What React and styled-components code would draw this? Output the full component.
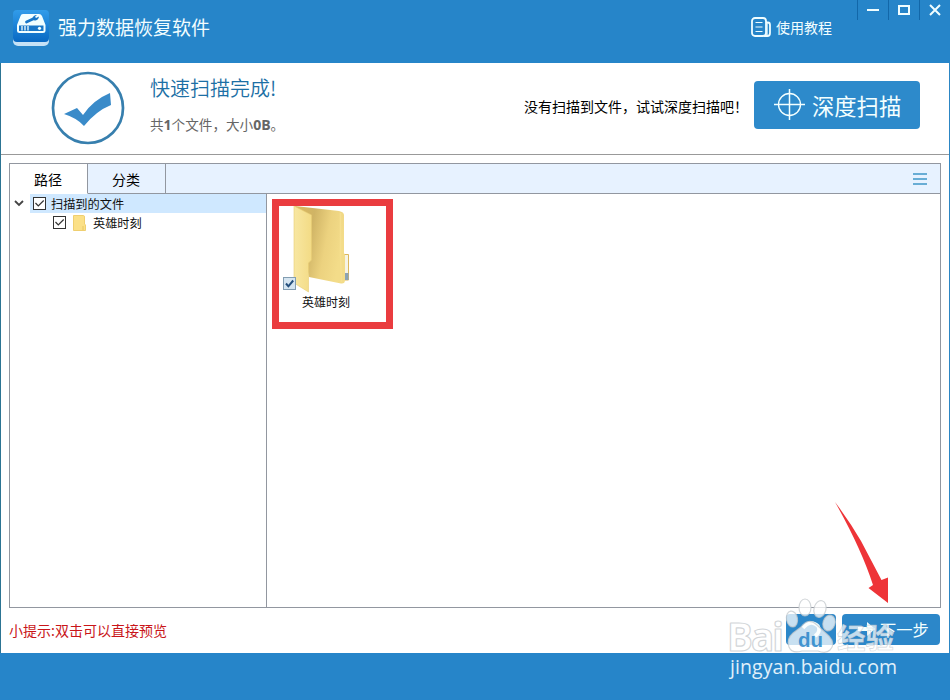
import React, { useState } from "react";
import styled, { createGlobalStyle } from "styled-components";

const GlobalStyle = createGlobalStyle`
  * {
    box-sizing: border-box;
  }
  body {
    margin: 0;
    font-family: "Noto Sans", "Noto Sans CJK SC", sans-serif;
    color: #111;
  }
`;

const Window = styled.div`
  position: relative;
  display: flex;
  flex-direction: column;
  width: 950px;
  height: 700px;
  overflow: hidden;
  background: #fff;
`;

const Header = styled.header`
  display: flex;
  align-items: flex-start;
  height: 63px;
  flex: none;
  padding-left: 11px;
  background: #2685c9;
  color: #f2fdff;
`;

const LogoIcon = styled.svg`
  width: 40px;
  height: 40px;
  margin-top: 8px;
`;

const Title = styled.h1`
  flex: 1;
  margin: 13px 0 0 7px;
  font-family: "Noto Sans CJK SC", sans-serif;
  font-size: 19px;
  font-weight: 400;
  line-height: 28px;
`;

const Tutorial = styled.div`
  display: flex;
  align-items: center;
  gap: 4px;
  margin: 17px 25px 0 0;
  font-family: "Noto Sans CJK SC", sans-serif;
  font-size: 14px;
  line-height: 20px;
`;

const WindowButton = styled.button`
  display: flex;
  justify-content: center;
  width: 31px;
  height: 20px;
  padding: 4px 0 0;
  border: 0;
  border-left: 1px solid #1267a9;
  background: none;
  color: #effdff;
`;

const Body = styled.main`
  display: flex;
  flex-direction: column;
  height: 590px;
  flex: none;
  border-left: 1px solid #2c7493;
  border-right: 1px solid #2c86c4;
`;

const Summary = styled.section`
  display: flex;
  align-items: flex-start;
  height: 92px;
  flex: none;
  padding: 8px 29px 0 50px;
  border-bottom: 1px solid #999;
`;

const SummaryText = styled.div`
  flex: 1;
  margin-left: 25px;
  font-family: "Noto Sans CJK SC", sans-serif;
`;

const Heading = styled.div`
  margin-top: 2px;
  color: #1c6fa5;
  font-size: 20px;
  font-weight: 350;
  line-height: 30px;
`;

const Detail = styled.div`
  margin-top: 11px;
  color: #666;
  font-size: 13.6px;
  line-height: 20px;

  b {
    font-family: "Open Sans", sans-serif;
    font-size: 14px;
  }
`;

const Notice = styled.div`
  width: 230px;
  margin-top: 25px;
  color: #000;
  font-family: "Noto Sans CJK SC", sans-serif;
  font-size: 14px;
  line-height: 20px;
  white-space: nowrap;
`;

const ScanButton = styled.button`
  display: flex;
  align-items: center;
  gap: 7px;
  width: 166px;
  height: 48px;
  margin-top: 10px;
  padding: 0 0 1px 20px;
  border: 0;
  border-radius: 4px;
  background: #2d8acb;
  color: #f3ffff;
  font-family: "Noto Sans CJK SC", sans-serif;
  font-size: 22.3px;
`;

const Panel = styled.section`
  display: flex;
  flex-direction: column;
  width: 932px;
  height: 445px;
  flex: none;
  margin: 8px 0 0 8px;
  border: 1px solid #9297a0;
`;

const TabBar = styled.div`
  display: flex;
  height: 30px;
  flex: none;
  background: #e7f2ff;
`;

const Tab = styled.button`
  width: 78px;
  height: 30px;
  padding: 0 1px 0 0;
  border: 0;
  border-right: 1px solid #9297a0;
  border-bottom: 1px solid ${(props) => (props.$active ? "#fff" : "#9297a0")};
  background: ${(props) => (props.$active ? "#fff" : "#e7f2ff")};
  color: #000;
  font-family: "Noto Sans CJK SC", sans-serif;
  font-size: 14px;
`;

const TabSpace = styled.div`
  display: flex;
  flex: 1;
  align-items: center;
  justify-content: flex-end;
  padding-right: 12px;
  border-bottom: 1px solid #9297a0;
`;

const Content = styled.div`
  display: flex;
  flex: 1;
`;

const Tree = styled.div`
  width: 257px;
  border-right: 1px solid #9297a0;
`;

const TreeRow = styled.div`
  display: flex;
  align-items: center;
  height: 19px;
  padding-left: ${(props) => (props.$child ? 43 : 4)}px;
`;

const TreeLabel = styled.div`
  display: flex;
  flex: 1;
  align-items: center;
  gap: ${(props) => props.$gap}px;
  height: 19px;
  padding-left: ${(props) => (props.$selected ? 3 : 0)}px;
  background: ${(props) => (props.$selected ? "#cfe8ff" : "transparent")};
  font-family: "Noto Sans CJK SC", sans-serif;
  font-size: 12.2px;
  line-height: 18px;
`;

const Chevron = styled.svg`
  width: 10px;
  height: 8px;
  margin-right: 6px;
`;

const Files = styled.div`
  position: relative;
  flex: 1;
`;

const FileItem = styled.div`
  position: relative;
  display: flex;
  flex-direction: column;
  align-items: center;
  width: 86px;
  margin-left: 16px;
  padding-top: 10px;
`;

const FolderSvg = styled.svg`
  width: 60px;
  height: 90px;
  margin-right: 9px;
`;

const FileName = styled.div`
  margin-top: -1px;
  font-family: "Noto Sans CJK SC", sans-serif;
  font-size: 12px;
  line-height: 18px;
`;

const FileCheck = styled.svg`
  position: absolute;
  left: 0;
  top: 83px;
`;

const RedFrame = styled.div`
  position: absolute;
  left: 5px;
  top: 5px;
  width: 121px;
  height: 130px;
  border: 7px solid #ea3c3f;
`;

const Footer = styled.footer`
  display: flex;
  flex: 1;
  align-items: flex-start;
  padding: 6px 9px 0 8px;
`;

const Tip = styled.div`
  flex: 1;
  margin-top: 6px;
  color: #c91519;
  font-family: "Noto Sans CJK SC", sans-serif;
  font-size: 14px;
  line-height: 20px;
`;

const ActionButton = styled.button`
  display: flex;
  align-items: center;
  justify-content: ${(props) => (props.$center ? "center" : "flex-start")};
  gap: 4px;
  width: ${(props) => props.$width}px;
  height: 31px;
  margin-left: 6px;
  padding: 0 0 1px ${(props) => (props.$center ? 0 : 15)}px;
  border: 0;
  border-radius: 4px;
  background: #2c87c9;
  color: #f3ffff;
  font-family: "Noto Sans CJK SC", sans-serif;
  font-size: 16.3px;
`;

const BottomBar = styled.div`
  flex: 1;
  background: #2685c9;
`;

const Arrow = styled.svg`
  position: absolute;
  left: 830px;
  top: 498px;
`;

const Watermark = styled.svg`
  position: absolute;
  left: 722px;
  top: 594px;
`;

const Logo = () => (
  <LogoIcon viewBox="0 0 40 40">
    <defs>
      <linearGradient id="logoBlue" x1="0" y1="0" x2="0" y2="1">
        <stop offset="0" stopColor="#319cea" />
        <stop offset="1" stopColor="#0869c3" />
      </linearGradient>
    </defs>
    <rect x="2" y="7" width="36" height="31" rx="5" fill="#c5e2f6" />
    <rect x="2" y="2" width="36" height="32" rx="4" fill="url(#logoBlue)" />
    <path d="M12 6H28Q30 6 31 8L34.5 17V23Q34.5 25 32 25H8.5Q6 25 6 23V17L9.5 8Q10 6 12 6Z" fill="#f1feff" />
    <path d="M8 17.5H32.5V23H8Z" fill="#1876c7" />
    <path d="M11 18V22.5M14 18V22.5M17 18V22.5" stroke="#f1feff" strokeWidth="1.3" />
    <circle cx="28.5" cy="20.3" r="1.6" fill="#f1feff" />
    <path d="M15.5 14L23 10.5" stroke="#1876c7" strokeWidth="2.8" strokeLinecap="round" />
    <path d="M26 7Q22 7 21.5 10.5Q22 13 24.5 12.5Q27.5 12 28 8.5L25 10L24 8.8Z" fill="#1876c7" />
  </LogoIcon>
);

const Check = () => (
  <svg width="13" height="13" viewBox="0 0 13 13">
    <rect x="0.5" y="0.5" width="12" height="12" fill="#fff" stroke="#333" />
    <path d="M2.5 6L5.3 9L10.7 3.5" fill="none" stroke="#333" strokeWidth="1.2" />
  </svg>
);

const FolderIcon = () => (
  <FolderSvg viewBox="0 0 60 90">
    <defs>
      <linearGradient id="folderBack" x1="0" y1="0" x2="1" y2="0.3">
        <stop offset="0" stopColor="#dcb95f" />
        <stop offset="0.38" stopColor="#d0b465" />
        <stop offset="0.7" stopColor="#ecd27f" />
        <stop offset="1" stopColor="#f3dc89" />
      </linearGradient>
      <linearGradient id="folderFront" x1="0" y1="0" x2="1" y2="0">
        <stop offset="0" stopColor="#f8e7a2" />
        <stop offset="1" stopColor="#f3db85" />
      </linearGradient>
    </defs>
    <path d="M50 50.5H56.5V76H50Z" fill="#f6f4e6" stroke="#dbb75c" />
    <path d="M53 69H56.5V76H53Z" fill="#8ba3b5" />
    <path d="M3 2L47 7Q52 8 52 11V49L53 51V76Q53 80 49 79.5L17 73Z" fill="url(#folderBack)" />
    <path d="M48.5 9V52L49.5 78" fill="none" stroke="#f5df91" strokeWidth="1.5" />
    <path d="M2 2L19.5 11V56L16.5 59V88L2 79Z" fill="url(#folderFront)" stroke="#e8cc74" strokeWidth="0.6" />
  </FolderSvg>
);

const App = () => {
  const [tab, setTab] = useState("路径");

  return (
    <>
      <GlobalStyle />
      <Window>
        <Header>
          <Logo />
          <Title>强力数据恢复软件</Title>
          <Tutorial>
            <svg width="21" height="20" viewBox="0 0 21 20" fill="none" stroke="#effdff">
              <rect x="1" y="1" width="14" height="18" rx="3" strokeWidth="1.8" />
              <path d="M15 5.5H17Q19 5.5 19 8V16Q19 19 16.5 19H13" strokeWidth="1.8" />
              <path d="M16 6V18" strokeWidth="1.3" />
              <path d="M4.5 5.5H11.5M4.5 10H11.5M4.5 14.5H11.5" strokeWidth="1.2" />
            </svg>
            使用教程
          </Tutorial>
          <WindowButton>
            <svg width="12" height="12">
              <path d="M0 6H12" stroke="currentColor" strokeWidth="2" />
            </svg>
          </WindowButton>
          <WindowButton>
            <svg width="12" height="12">
              <rect x="1" y="2" width="10" height="8" fill="none" stroke="currentColor" strokeWidth="2" />
            </svg>
          </WindowButton>
          <WindowButton>
            <svg width="12" height="12">
              <path d="M1 1L11 11M11 1L1 11" stroke="currentColor" strokeWidth="2" />
            </svg>
          </WindowButton>
        </Header>

        <Body>
          <Summary>
            <svg width="74" height="74" viewBox="0 0 74 74">
              <circle cx="37" cy="37" r="35" fill="none" stroke="#377fae" strokeWidth="2.7" />
              <path
                d="M13 43L26 37L32 44Q42 29 59 22L60 34Q45 40 33 55Q26 47 13 43Z"
                fill="#3a8bc9"
              />
            </svg>
            <SummaryText>
              <Heading>快速扫描完成!</Heading>
              <Detail>
                共<b>1</b>个文件，大小<b>0B</b>。
              </Detail>
            </SummaryText>
            <Notice>没有扫描到文件，试试深度扫描吧！</Notice>
            <ScanButton>
              <svg width="31" height="31" viewBox="0 0 31 31" fill="none" stroke="currentColor">
                <circle cx="15.5" cy="15.5" r="11" strokeWidth="1.3" />
                <path d="M0 15.5H31M15.5 0V31" strokeWidth="1.5" />
              </svg>
              深度扫描
            </ScanButton>
          </Summary>

          <Panel>
            <TabBar>
              {["路径", "分类"].map((name) => (
                <Tab key={name} $active={tab === name} onClick={() => setTab(name)}>
                  {name}
                </Tab>
              ))}
              <TabSpace>
                <svg width="16" height="14">
                  <path d="M1 2H15M1 7H15M1 12H15" stroke="#68add5" strokeWidth="1.8" />
                </svg>
              </TabSpace>
            </TabBar>
            <Content>
              <Tree>
                <TreeRow>
                  <Chevron viewBox="0 0 10 8">
                    <path d="M1 1L5 5L9 1" fill="none" stroke="#444" strokeWidth="1.8" />
                  </Chevron>
                  <TreeLabel $selected $gap={5}>
                    <Check />
                    扫描到的文件
                  </TreeLabel>
                </TreeRow>
                <TreeRow $child>
                  <TreeLabel $gap={7}>
                    <Check />
                    <svg width="13" height="16" viewBox="0 0 13 16">
                      <path d="M0.5 0.5H10.5Q11.5 0.5 11.5 2V9L12.5 10V15.5H0.5Z" fill="#fbe087" stroke="#efcf70" />
                      <path d="M10 11V15" stroke="#e7c660" />
                    </svg>
                    英雄时刻
                  </TreeLabel>
                </TreeRow>
              </Tree>
              <Files>
                <FileItem>
                  <FolderIcon />
                  <FileName>英雄时刻</FileName>
                  <FileCheck width="13" height="13" viewBox="0 0 13 13">
                    <rect x="0.5" y="0.5" width="12" height="12" fill="#d5e5f1" stroke="#829db1" />
                    <path d="M3 6.5L5.4 9.3L10.2 3.5" fill="none" stroke="#244f7c" strokeWidth="2" />
                  </FileCheck>
                </FileItem>
                <RedFrame />
              </Files>
            </Content>
          </Panel>

          <Footer>
            <Tip>小提示:双击可以直接预览</Tip>
            <ActionButton $center $width={50}>
              <svg width="24" height="20" viewBox="0 0 24 20">
                <path d="M4 9Q12 0 19 7Q22 13 16 17" fill="none" stroke="#f3ffff" strokeWidth="3.5" />
              </svg>
            </ActionButton>
            <ActionButton $width={98}>
              <svg width="19" height="16" viewBox="0 0 19 16">
                <path d="M1 6H10V1L18 8L10 15V10H1Z" fill="#f3ffff" />
              </svg>
              下一步
            </ActionButton>
          </Footer>
        </Body>
        <BottomBar />

        <Arrow width="62" height="108" viewBox="0 0 62 108">
          <path d="M5 4Q20 24 31 43L51.5 82L58 79.5V105L38.5 90L43 87Q31 50 5 4Z" fill="#ee3438" />
        </Arrow>

        <Watermark width="184" height="92" viewBox="0 0 184 92">
          <g
            fill="#fff"
            fillOpacity="0.74"
            stroke="#c3c8cc"
            strokeOpacity="0.75"
            strokeWidth="1.2"
            strokeLinejoin="round"
            fontWeight="700"
          >
            <text x="5" y="57" fontFamily="Open Sans, sans-serif" fontSize="38.5" textLength="57">
              Bai
            </text>
            <ellipse cx="70" cy="25" rx="5.5" ry="8" transform="rotate(-10 70 25)" />
            <ellipse cx="83" cy="13.5" rx="6" ry="8.5" />
            <ellipse cx="98" cy="15" rx="6" ry="8.5" transform="rotate(14 98 15)" />
            <ellipse cx="107" cy="29" rx="6" ry="8" transform="rotate(18 107 29)" />
            <path d="M79 33Q86 23 95 31L107 42Q114 50 108 56Q104 60 96 57H80Q70 60 67 53Q64 45 71 39Z" />
            <text
              x="115"
              y="55"
              fontFamily="Noto Sans CJK SC, sans-serif"
              fontSize="28.5"
              strokeWidth="0.6"
            >
              经验
            </text>
          </g>
          <text
            x="76"
            y="53"
            fill="#2685c9"
            fillOpacity="0.85"
            fontFamily="Liberation Sans, sans-serif"
            fontSize="20.5"
            fontWeight="700"
          >
            du
          </text>
          <text
            x="8"
            y="80"
            fill="#e0f0fa"
            fontFamily="Open Sans, sans-serif"
            fontSize="19.5"
            textLength="167"
          >
            jingyan.baidu.com
          </text>
        </Watermark>
      </Window>
    </>
  );
};

export default App;
